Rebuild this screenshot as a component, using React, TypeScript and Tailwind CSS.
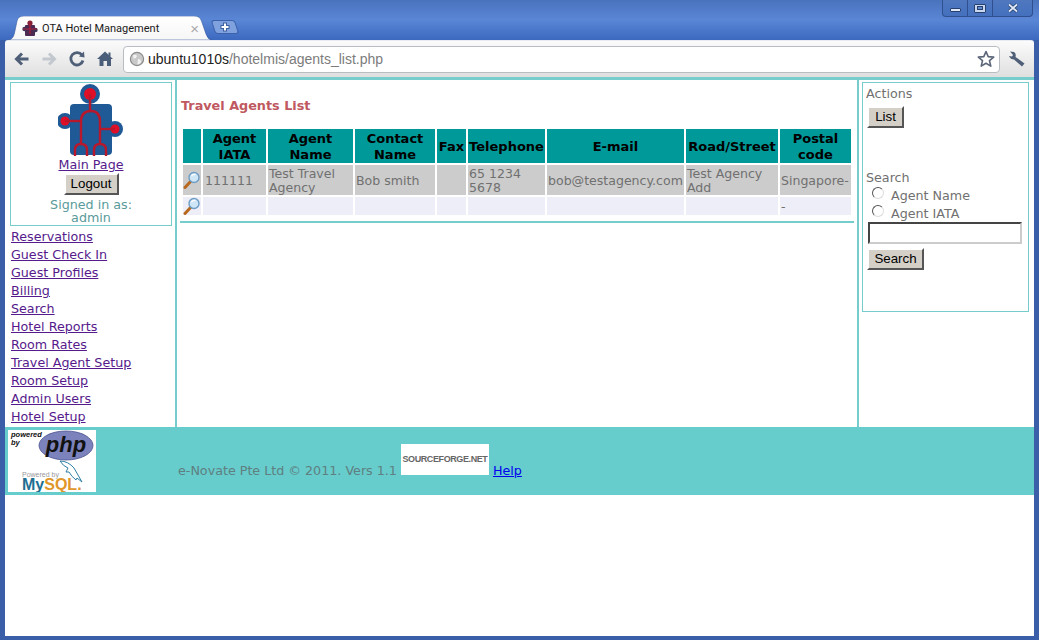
import React from 'react';

const navLinks = [
  'Reservations',
  'Guest Check In',
  'Guest Profiles',
  'Billing',
  'Search',
  'Hotel Reports',
  'Room Rates',
  'Travel Agent Setup',
  'Room Setup',
  'Admin Users',
  'Hotel Setup',
];

const Lens = () => (
  <svg width="18" height="18" viewBox="0 0 18 18" className="block">
    <path d="M8 10 L2 16.5" stroke="#b8691f" strokeWidth="3" strokeLinecap="round" />
    <circle cx="11" cy="6.5" r="5" fill="#cfe6f7" stroke="#6d9cc4" strokeWidth="1.4" />
    <path d="M8.5 5 Q10 3 12.5 3.5" stroke="#fff" strokeWidth="1.3" fill="none" />
  </svg>
);

const Logo = () => (
  <svg width="66" height="73" viewBox="0 0 66 73" className="block">
    <rect x="12" y="20" width="42" height="51" rx="4" fill="#1f5a96" />
    <circle cx="32" cy="10" r="10" fill="#1f5a96" />
    <circle cx="7" cy="37" r="8" fill="#1f5a96" />
    <circle cx="57" cy="45" r="8" fill="#1f5a96" />
    <circle cx="32" cy="10" r="6" fill="#e00f27" />
    <circle cx="7" cy="37" r="4.5" fill="#e00f27" />
    <circle cx="57" cy="45" r="4.5" fill="#e00f27" />
    <g stroke="#b8182c" strokeWidth="2.4" fill="none">
      <path d="M32 10 V26" />
      <path d="M7 37 L24 37" />
      <path d="M42 45 L57 45" />
      <path d="M23 60 V38 Q23 27 33 27 Q42 27 42 38 V60" />
      <path d="M17 72 V66 Q17 60 23 60 Q29 60 29 66 V72" />
      <path d="M36 72 V66 Q36 60 42 60 Q48 60 48 66 V72" />
    </g>
  </svg>
);

const TabIcon = () => (
  <svg width="16" height="17" viewBox="0 0 16 17" className="block shrink-0">
    <rect x="3" y="5" width="10" height="11" rx="1" fill="#4a2a50" />
    <circle cx="8" cy="3" r="2.6" fill="#8a2035" />
    <circle cx="2.5" cy="9" r="2.2" fill="#3e3358" />
    <circle cx="13.5" cy="10" r="2.2" fill="#3e3358" />
    <path d="M1 9 H15 M8 4 V14" stroke="#b01c38" strokeWidth="1.2" />
  </svg>
);

const WinButtons = () => (
  <div className="absolute right-[6px] top-0 flex h-[17px] w-[91px] rounded-b-[4px] border border-t-0 border-[#2f4f8f] bg-gradient-to-b from-[#4f78c0] to-[#4470bd]">
    <div className="flex w-[25px] items-center justify-center border-r border-[#2f4f8f]">
      <div className="mt-[4px] h-[4px] w-[11px] rounded-[1px] border border-[#26406f] bg-[#dfe8f6]" />
    </div>
    <div className="flex w-[25px] items-center justify-center border-r border-[#2f4f8f]">
      <div className="flex h-[9px] w-[12px] items-center justify-center rounded-[1px] border border-[#26406f] bg-[#c9d8ef]">
        <div className="h-[4px] w-[6px] border border-[#26406f] bg-[#5f88cf]" />
      </div>
    </div>
    <div className="flex flex-1 items-center justify-center">
      <svg width="12" height="10" viewBox="0 0 12 10">
        <path d="M2 1.5 L10 8.5 M10 1.5 L2 8.5" stroke="#26406f" strokeWidth="3.4" />
        <path d="M2 1.5 L10 8.5 M10 1.5 L2 8.5" stroke="#dfe8f6" strokeWidth="1.8" />
      </svg>
    </div>
  </div>
);

const TitleBar = () => (
  <div className="relative flex h-[40px] items-end bg-gradient-to-b from-[#4a73bd] via-[#5a86d6] to-[#3c69bf] pl-[8px]">
    <WinButtons />
    <div className="relative flex h-[24px] w-[204px] items-center pl-[14px] pr-[14px]">
      <svg width="204" height="24" viewBox="0 0 204 24" className="absolute left-0 top-0">
        <defs>
          <linearGradient id="tabFill" x1="0" y1="0" x2="0" y2="1">
            <stop offset="0" stopColor="#ffffff" />
            <stop offset="1" stopColor="#f6f6f6" />
          </linearGradient>
        </defs>
        <path
          d="M0 24 Q5 24 6.5 17 L9 5 Q10 0 16 0 H186 Q192 0 193.5 5 L198 18 Q200 24 204 24 Z"
          fill="url(#tabFill)"
          stroke="#3459a0"
          strokeWidth="0.6"
        />
      </svg>
      <div className="relative"><TabIcon /></div>
      <span className="relative ml-[4px] mt-[2px] font-['Roboto',sans-serif] text-[11px] text-[#1a1a1a]">OTA Hotel Management</span>
      <span className="relative ml-auto mr-[-1px] font-['Liberation_Sans',sans-serif] text-[15px] leading-none text-[#a9a9a9]">×</span>
    </div>
    <div className="mb-[6px] ml-[1px] flex h-[14px] w-[24px] items-center justify-center rounded-[3px] border border-[#3b62ab] bg-[#7fa2de] [transform:skewX(18deg)]">
      <svg width="12" height="12" viewBox="0 0 12 12" className="[transform:skewX(-18deg)]">
        <path d="M6 1.5 V10.5 M1.5 6 H10.5" stroke="#3b5f9f" strokeWidth="4" />
        <path d="M6 2.5 V9.5 M2.5 6 H9.5" stroke="#ffffff" strokeWidth="2" />
      </svg>
    </div>
  </div>
);

const Toolbar = () => (
  <div className="flex h-[37px] items-center rounded-t-[3px] border-t border-[#e8ecf2] bg-gradient-to-b from-[#fbfbfb] to-[#dfdfdf] pl-[8px]">
    <svg width="18" height="18" viewBox="0 0 18 18">
      <path d="M15.5 9 H4 M9 3.5 L3.5 9 L9 14.5" stroke="#4f5f78" strokeWidth="3" fill="none" />
    </svg>
    <svg width="18" height="18" viewBox="0 0 18 18" className="ml-[9px]">
      <path d="M2.5 9 H14 M9 3.5 L14.5 9 L9 14.5" stroke="#c3c8cf" strokeWidth="3" fill="none" />
    </svg>
    <svg width="18" height="18" viewBox="0 0 18 18" className="ml-[10px]">
      <path d="M14 5 A6.2 6.2 0 1 0 15 10.5" stroke="#4f5f78" strokeWidth="2.8" fill="none" />
      <path d="M11 6.5 L16.5 7.5 L16 1.5 Z" fill="#4f5f78" />
    </svg>
    <svg width="18" height="18" viewBox="0 0 18 18" className="ml-[10px]">
      <path d="M9 1.5 L17 9 L15 9 V16 H11 V11 H7.5 V16 H3.5 V9 L1 9 Z" fill="#4a5e7a" />
      <rect x="12.5" y="2.5" width="2" height="4" fill="#4a5e7a" />
    </svg>
    <div className="ml-[9px] flex h-[27px] w-[877px] items-center rounded-[4px] border border-[#b9bcc2] bg-white pl-[5px] pr-[4px]">
      <svg width="16" height="16" viewBox="0 0 16 16" className="shrink-0">
        <circle cx="8" cy="8" r="6.6" fill="#c9c9c9" stroke="#8c8c8c" strokeWidth="1.2" />
        <path d="M4 4 Q7 3 8 5 Q7 8 4.5 7.5 Z M9 8 Q12 8 12 11 Q10 14 8.5 13 Z" fill="#f2f2f2" />
      </svg>
      <span className="ml-[3px] font-['Liberation_Sans',sans-serif] text-[14px] text-[#222]">
        ubuntu1010s<span className="text-[#7c7c7c]">/hotelmis/agents_list.php</span>
      </span>
      <svg width="18" height="18" viewBox="0 0 18 18" className="ml-auto shrink-0">
        <path d="M9 1.5 L11.2 6.6 L16.7 7.1 L12.5 10.7 L13.8 16.1 L9 13.3 L4.2 16.1 L5.5 10.7 L1.3 7.1 L6.8 6.6 Z" fill="#fff" stroke="#5b6678" strokeWidth="1.6" strokeLinejoin="round" />
      </svg>
    </div>
    <svg width="18" height="18" viewBox="0 0 18 18" className="ml-[8px]">
      <path d="M2 1.5 L6 2 Q8.5 3.5 7.5 7 L16.5 13.5 L14 16.5 L6 9.5 Q2.5 9.5 1 6 L4 6.5 L5 5 Z" fill="#4f5f78" />
    </svg>
  </div>
);

const Btn = ({ label, className }: { label: string; className: string }) => (
  <button
    className={`block border-2 border-t-white border-l-white border-r-[#555] border-b-[#555] bg-[#d4d0c8] font-['Liberation_Sans',sans-serif] text-[13.33px] leading-none text-black ${className}`}
  >
    {label}
  </button>
);

const Sidebar = () => (
  <div className="w-[170px] shrink-0 pl-[5px] pt-[2px]">
    <div className="flex h-[144px] w-[162px] flex-col items-center border border-[#77cccc] pt-[1px]">
      <Logo />
      <a className="text-[12.7px] leading-[15px] text-[#551a8b] underline">Main Page</a>
      <Btn label="Logout" className="mt-[1px] h-[22px] w-[55px]" />
      <div className="mt-[3px] text-center text-[12.7px] leading-[13px] text-[#5a9a9a]">
        Signed in as:
        <br />
        admin
      </div>
    </div>
    <div className="mt-[2px] flex flex-col pl-[1px]">
      {navLinks.map((l) => (
        <a key={l} className="h-[18px] text-[12.7px] leading-[18px] text-[#551a8b] underline">
          {l}
        </a>
      ))}
    </div>
  </div>
);

const thClass = 'bg-[#009999] p-0 pt-[1px] text-center align-middle text-[13px] font-bold leading-[16px] text-black';
const tdClass = 'p-0 pl-[1px] pt-[1px] align-middle text-[12.55px] leading-[14px] text-[#707070]';
const tdWide = 'p-0 pl-[2px] pt-[1px] align-middle text-[12.55px] leading-[14px] text-[#707070]';

const AgentTable = () => (
  <table className="ml-[4px] w-[672px] table-fixed border-separate border-spacing-[2px]">
    <colgroup>
      <col className="w-[18px]" />
      <col className="w-[63px]" />
      <col className="w-[85px]" />
      <col className="w-[80px]" />
      <col className="w-[29px]" />
      <col className="w-[77px]" />
      <col className="w-[137px]" />
      <col className="w-[92px]" />
      <col className="w-[71px]" />
    </colgroup>
    <thead>
      <tr className="h-[34px]">
        <th className={thClass}></th>
        <th className={thClass}>Agent<br />IATA</th>
        <th className={thClass}>Agent<br />Name</th>
        <th className={thClass}>Contact<br />Name</th>
        <th className={thClass}>Fax</th>
        <th className={thClass}>Telephone</th>
        <th className={thClass}>E-mail</th>
        <th className={thClass}>Road/Street</th>
        <th className={thClass}>Postal<br />code</th>
      </tr>
    </thead>
    <tbody>
      <tr className="h-[30px] bg-[#cccccc]">
        <td className="bg-[#cccccc] p-0"><Lens /></td>
        <td className={tdWide}>111111</td>
        <td className={tdClass}>Test Travel<br />Agency</td>
        <td className={tdClass}>Bob smith</td>
        <td className={tdClass}></td>
        <td className={tdClass}>65 1234<br />5678</td>
        <td className={tdClass}>bob@testagency.com</td>
        <td className={tdClass}>Test Agency<br />Add</td>
        <td className={tdClass}>Singapore-</td>
      </tr>
      <tr className="h-[18px] bg-[#eeeef8]">
        <td className="bg-[#eeeef8] p-0"><Lens /></td>
        <td className={tdClass}></td>
        <td className={tdClass}></td>
        <td className={tdClass}></td>
        <td className={tdClass}></td>
        <td className={tdClass}></td>
        <td className={tdClass}></td>
        <td className={tdClass}></td>
        <td className={tdClass}>-</td>
      </tr>
    </tbody>
  </table>
);

const Actions = () => (
  <div className="w-[174px] shrink-0 pl-[3px] pt-[2px]">
    <div className="h-[230px] w-[167px] border border-[#77cccc] pl-[3px] text-[12.7px] text-[#707070]">
      <div className="mt-[3px] leading-[15px]">Actions</div>
      <Btn label="List" className="ml-[1px] mt-[5px] h-[22px] w-[37px]" />
      <div className="mt-[42px] leading-[15px]">Search</div>
      <label className="ml-[6px] mt-[2px] flex h-[18px] items-center">
        <span className="mt-[-7px] h-[12px] w-[12px] rounded-full border border-t-[#555] border-l-[#555] border-r-[#ddd] border-b-[#ddd] bg-white" />
        <span className="ml-[7px]">Agent Name</span>
      </label>
      <label className="ml-[6px] flex h-[18px] items-center">
        <span className="mt-[-7px] h-[12px] w-[12px] rounded-full border border-t-[#555] border-l-[#555] border-r-[#ddd] border-b-[#ddd] bg-white" />
        <span className="ml-[7px]">Agent IATA</span>
      </label>
      <div className="ml-[2px] mt-[-1px] h-[22px] w-[154px] border-2 border-t-[#444] border-l-[#444] border-r-[#ccc] border-b-[#ccc] bg-white" />
      <Btn label="Search" className="ml-[1px] mt-[4px] h-[22px] w-[57px]" />
    </div>
  </div>
);

const Badges = () => (
  <div className="relative h-[62px] w-[88px] shrink-0 bg-white">
    <svg width="88" height="62" viewBox="0 0 88 62" className="absolute left-0 top-0">
      <ellipse cx="58" cy="15.5" rx="27" ry="14.5" fill="#7b82bc" stroke="#4e5490" strokeWidth="0.8" />
      <text x="58" y="22" textAnchor="middle" fontFamily="Liberation Sans, sans-serif" fontStyle="italic" fontWeight="700" fontSize="22" fill="#111">php</text>
      <text x="3" y="7" fontFamily="Liberation Sans, sans-serif" fontStyle="italic" fontWeight="700" fontSize="7.5" fill="#111">powered</text>
      <text x="3" y="15" fontFamily="Liberation Sans, sans-serif" fontStyle="italic" fontWeight="700" fontSize="7.5" fill="#111">by</text>
      <text x="14" y="47" fontFamily="Liberation Sans, sans-serif" fontSize="7" fill="#999">Powered by</text>
      <text x="14" y="60" fontFamily="Liberation Sans, sans-serif" fontWeight="700" fontSize="16" fill="#1f6f92">My<tspan fill="#e0962a">SQL.</tspan></text>
      <path d="M52 31 Q60 31 66 38 Q70 45 74 52 L69 48 L68 50 Q63 46 61 42 L58 42 L60 38 Q55 36 52 31 Z" fill="#fff" stroke="#2f7ea6" strokeWidth="1" />
    </svg>
  </div>
);

export default function App() {
  return (
    <div className="flex h-[640px] w-[1039px] flex-col overflow-hidden bg-[#3a5fa8] font-['DejaVu_Sans',sans-serif]">
      <TitleBar />
      <div className="flex flex-1 flex-col px-[5px] pb-[4px]">
        <Toolbar />
        <div className="flex flex-1 flex-col bg-white">
          <div className="flex h-[350px] border-t-[3px] border-[#77cccc]">
            <Sidebar />
            <div className="w-[684px] shrink-0 border-x-2 border-[#77cccc]">
              <h2 className="ml-[4px] mt-[18px] text-[12.8px] font-bold leading-[15px] text-[#c0585f]">Travel Agents List</h2>
              <div className="mt-[14px]"><AgentTable /></div>
              <div className="ml-[3px] mt-[4px] h-[2px] w-[674px] bg-[#77cccc]" />
            </div>
            <Actions />
          </div>
          <div className="flex h-[68px] items-start bg-[#66cccc] pl-[3px] pt-[3px]">
            <Badges />
            <span className="ml-[82px] mt-[33px] text-[12.7px] leading-[15px] text-[#5f7f80]">e-Novate Pte Ltd © 2011. Vers 1.1</span>
            <div className="ml-[4px] mt-[14px] flex h-[31px] w-[88px] items-center justify-center bg-white font-['Liberation_Sans',sans-serif] text-[9px] font-bold tracking-[-0.4px] text-[#666]">
              SOURCEFORGE.NET
            </div>
            <a className="ml-[4px] mt-[33px] text-[12.7px] leading-[15px] text-[#0000ee] underline">Help</a>
          </div>
        </div>
      </div>
    </div>
  );
}
